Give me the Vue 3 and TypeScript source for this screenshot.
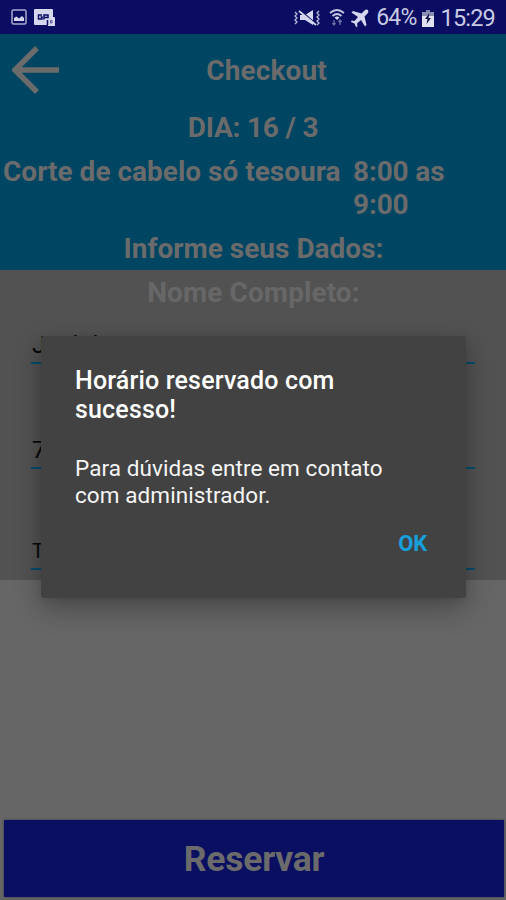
<script setup lang="ts">
import { ref } from 'vue'

interface Field {
  id: string
  value: string
}

const fields = ref<Field[]>([
  { id: 'name', value: 'Joel darini narci' },
  { id: 'phone', value: '79' },
  { id: 'note', value: 'T' },
])
</script>

<template>
  <div class="screen">
    <header class="status">
      <div class="status-left">
        <svg width="16" height="16" viewBox="0 0 16 16">
          <rect x="1" y="1" width="14" height="14" rx="1.5" fill="none" stroke="#a9abd0" stroke-width="1.5" />
          <path d="M3 12V9l2.5-1.5L8 9.5 11 7l2 2v3z" fill="#d5d7ee" />
        </svg>
        <svg width="22" height="18" viewBox="0 0 22 18">
          <path d="M1 0h17a1 1 0 0 1 1 1v7h1a1 1 0 0 1 1 1v8h-7v-1H1a1 1 0 0 1-1-1V1a1 1 0 0 1 1-1z" fill="#d5d7ee" />
          <path d="M8 6H4.500v4H8V8H6.500M10 10.500V6h4v2.500h-4M13.500 16v-5" fill="none" stroke="#0a0d62" stroke-width="1.500" />
          <path d="M16.500 11.500h1.500v2.500h-1.500z" fill="none" stroke="#5a5c93" />
        </svg>
      </div>
      <div class="status-right">
        <svg class="mute" width="27" height="18" viewBox="0 0 27 18">
          <path d="M6 6h5l8-5v15l-8-5H6z" fill="#d5d7ee" />
          <path d="M6 1l15 13" stroke="#0a0d62" stroke-width="1.500" />
          <path d="M5 2l17 14" stroke="#d5d7ee" stroke-width="1.700" />
          <path d="M1 3l2 2-2 2 2 2-2 2 2 2-2 2M25 2l-2 2 2 2-2 2 2 2-2 2 2 2-2 2" fill="none" stroke="#b9bbda" stroke-width="1.300" />
        </svg>
        <svg class="wifi" width="16" height="18" viewBox="0 0 16 18">
          <path d="M1 4q7-6 14 0M3.500 7q4.500-4 9 0" fill="none" stroke="#c5c7e0" stroke-width="1.700" />
          <path d="M5.500 8.500q2.500-2 5 0L8 11z" fill="#d5d7ee" />
          <path d="M5 11v5M11 11v5M3.500 14L5 16l1.500-2M9.500 13l1.500-2 1.500 2" fill="none" stroke="#6d70a5" stroke-width="1.300" />
        </svg>
        <svg class="plane" width="18" height="18" viewBox="0 0 18 18">
          <path d="M17 1q-2-1-3.500.5L10.500 4.500 2 2 .5 3.500 7 8l-3.500 4-3-.500L0 13l3.500 1.500L5 18l1.500-.500L6 14.500 10 11l4 6.500 1.500-1.500L13.500 7.500 16.500 4.500Q18 3 17 1z" fill="#d5d7ee" />
        </svg>
        <span class="percent">64%</span>
        <svg class="battery" width="12" height="17" viewBox="0 0 12 17">
          <path d="M4 0h4v2H4z" fill="#8184ad" />
          <path d="M0 2h12v5H0z" fill="#8b8db2" />
          <path d="M0 6h12v11H0z" fill="#e1e2ef" />
          <path d="M7.500 3L3 9h2.500L4.500 14 9 8H6.500z" fill="#0a0d42" />
        </svg>
        <span class="clock">15:29</span>
      </div>
    </header>

    <main class="page">
      <section class="summary">
        <div class="titlebar">
          <svg class="back" width="48" height="48" viewBox="0 0 48 48">
            <path d="M25 2L3 24l22 22M3 24h44" fill="none" stroke="#6b6b6b" stroke-width="5.500" />
          </svg>
          <h1 class="line checkout">Checkout</h1>
        </div>
        <p class="line day">DIA: 16 / 3</p>
        <div class="service">
          <p class="line service-name">Corte de cabelo só tesoura</p>
          <p class="line service-time">8:00 as 9:00</p>
        </div>
        <p class="line inform">Informe seus Dados:</p>
      </section>
      <section class="form">
        <p class="line label">Nome Completo:</p>
        <div v-for="field in fields" :key="field.id" class="field" :class="field.id">{{ field.value }}</div>
      </section>
      <footer class="footer">
        <button class="reserve">Reservar</button>
      </footer>
    </main>

    <div class="dialog" role="dialog">
      <h2 class="dialog-title">Horário reservado com sucesso!</h2>
      <p class="dialog-text">Para dúvidas entre em contato com administrador.</p>
      <div class="actions"><button class="ok">OK</button></div>
    </div>
  </div>
</template>

<style>
body {
  margin: 0;
}
</style>

<style scoped>
.screen {
  position: relative;
  display: flex;
  flex-direction: column;
  width: 506px;
  height: 900px;
  overflow: hidden;
  background: #666;
  font-family: Roboto, "Liberation Sans", sans-serif;
}
p,
h1,
h2 {
  margin: 0;
}
button {
  border: 0;
  padding: 0;
  font-family: inherit;
}
.status {
  display: flex;
  justify-content: space-between;
  box-sizing: border-box;
  height: 34px;
  padding: 0 11px 0 11px;
  background: #0a0d62;
  color: #c8cae3;
}
.status-left {
  display: flex;
  align-items: flex-start;
  gap: 7px;
  padding-top: 9px;
}
.status-right {
  display: flex;
  align-items: center;
  padding-top: 2px;
  line-height: 32px;
}
.wifi {
  margin-left: 8px;
}
.plane {
  margin-left: 6px;
}
.percent {
  margin-left: 7px;
  font-size: 23px;
  letter-spacing: -0.800px;
}
.battery {
  margin: 0 6px 0 6px;
}
.clock {
  font-size: 23.500px;
  letter-spacing: -0.800px;
}
.page {
  flex: 1;
  display: flex;
  flex-direction: column;
}
.summary {
  box-sizing: border-box;
  height: 236px;
  background: #004562;
}
.line {
  color: #6b6b6b;
  font-size: 28px;
  font-weight: 700;
  line-height: 33px;
  text-align: center;
}
.titlebar {
  display: grid;
  grid-template-columns: 60px 1fr 60px;
  align-items: center;
  height: 71px;
}
.back {
  margin-left: 12px;
}
.checkout {
  padding: 2px 0 0 27px;
  letter-spacing: 0.120px;
}
.day {
  margin-top: 6px;
  letter-spacing: -0.200px;
}
.service {
  display: flex;
  gap: 12px;
  margin-top: 11px;
  padding-left: 3px;
}
.service-name,
.service-time {
  text-align: left;
}
.service-name {
  width: 338px;
  white-space: nowrap;
}
.service-time {
  width: 110px;
  letter-spacing: -0.150px;
}
.inform {
  margin-top: 11px;
  padding-left: 1px;
}
.form {
  height: 310px;
  padding: 0 31px;
  background: #525252;
}
.label {
  padding: 6px 0 0 1px;
  color: #676767;
  letter-spacing: 0.080px;
}
.field {
  box-sizing: border-box;
  height: 38px;
  border-bottom: 2px solid #004c6c;
  padding-left: 1px;
  color: #090909;
  font-size: 24.500px;
  line-height: 38px;
}
.name {
  margin-top: 17px;
}
.phone {
  margin-top: 67px;
}
.note {
  margin-top: 63px;
  font-size: 20px;
  line-height: 39px;
}
.footer {
  margin-top: auto;
  padding: 0 2px 3px 4px;
}
.reserve {
  display: block;
  width: 100%;
  height: 77px;
  padding-top: 1px;
  background: #0a0f62;
  color: #6b6b6b;
  font-size: 35.500px;
  font-weight: 700;
  letter-spacing: -0.250px;
  box-shadow: 0 0 2px #353558;
}
.dialog {
  position: absolute;
  top: 336px;
  left: 41px;
  box-sizing: border-box;
  width: 425px;
  height: 262px;
  padding: 30px 34px 0;
  border-radius: 3px;
  background: #424242;
  box-shadow: 0 10px 28px rgba(0, 0, 0, 0.3), 0 2px 6px rgba(0, 0, 0, 0.08);
}
.dialog-title {
  width: 300px;
  color: #fff;
  font-size: 25px;
  font-weight: 500;
  letter-spacing: 0.170px;
  line-height: 29px;
}
.dialog-text {
  width: 340px;
  margin-top: 31px;
  color: #f5f5f5;
  font-size: 22.500px;
  letter-spacing: 0.080px;
  line-height: 26.500px;
}
.actions {
  display: flex;
  justify-content: flex-end;
  margin-top: 22px;
  padding-right: 5px;
}
.ok {
  background: none;
  color: #179fdc;
  font-size: 22px;
  font-weight: 700;
  line-height: 28px;
  letter-spacing: -0.200px;
}
</style>
